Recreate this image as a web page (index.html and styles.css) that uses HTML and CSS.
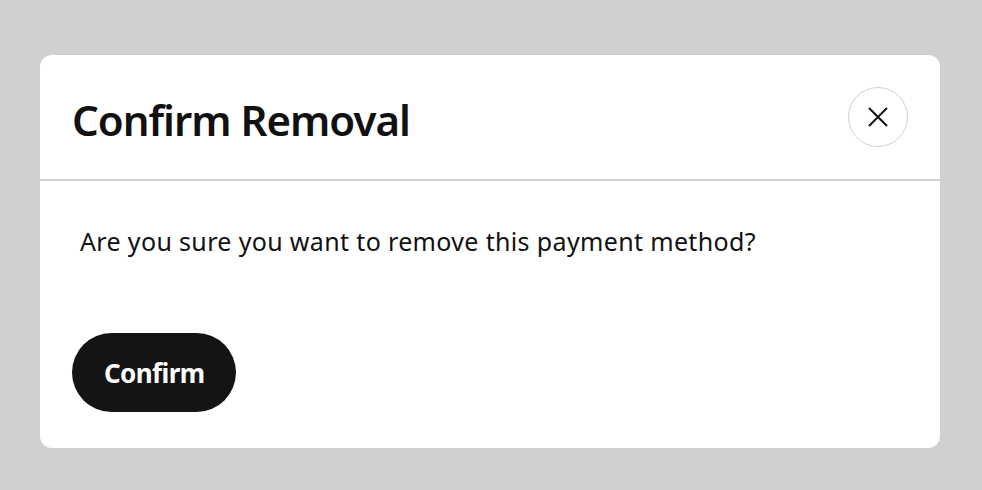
FILE: index.html
```html
<!DOCTYPE html>
<html>
<head>
<meta charset="utf-8">
<link rel="stylesheet" href="styles.css">
</head>
<body>
<div class="page">
  <div class="modal">
    <div class="modal-header">
      <h1 class="title">Confirm Removal</h1>
      <button class="close" aria-label="Close">
        <svg width="22" height="22" viewBox="0 0 22 22"><path d="M2 2 L20 20 M20 2 L2 20" stroke="#111" stroke-width="2" fill="none"/></svg>
      </button>
    </div>
    <div class="modal-body">
      <p class="message">Are you sure you want to remove this payment method?</p>
      <button class="confirm">Confirm</button>
    </div>
  </div>
</div>
</body>
</html>
```

FILE: styles.css
```css
html, body {
  margin: 0;
  padding: 0;
  background: #d0d0d0;
  font-family: "Noto Sans", "Open Sans", sans-serif;
}
.page {
  padding: 55px 42px 42px 40px;
}
.modal {
  background: #fff;
  border-radius: 12px;
  height: 393px;
  display: flex;
  flex-direction: column;
}
.modal-header {
  border-bottom: 2px solid #cfd0d2;
  display: flex;
  align-items: center;
  justify-content: space-between;
  padding: 0 32px;
  box-sizing: border-box;
  height: 126px;
}
.title {
  margin: 0;
  font-size: 42px;
  font-weight: 600;
  color: #111;
  letter-spacing: -1px;
  padding-top: 4px;
}
.close {
  width: 60px;
  height: 60px;
  border-radius: 50%;
  border: 1.5px solid #cfd0d2;
  background: #fff;
  display: flex;
  align-items: center;
  justify-content: center;
  padding: 0;
}
.modal-body {
  padding: 42px 32px 36px 32px;
  display: flex;
  flex-direction: column;
  align-items: flex-start;
}
.message {
  margin: 0 0 0 8px;
  font-size: 25px;
  color: #111;
  line-height: 36px;
  letter-spacing: 0.35px;
}
.confirm {
  margin-top: 74px;
  height: 79px;
  padding: 0 32px;
  border: none;
  border-radius: 40px;
  background: #141414;
  color: #fff;
  font-family: "Noto Sans", sans-serif;
  font-size: 26px;
  font-weight: 700;
  letter-spacing: -0.6px;
}
```
